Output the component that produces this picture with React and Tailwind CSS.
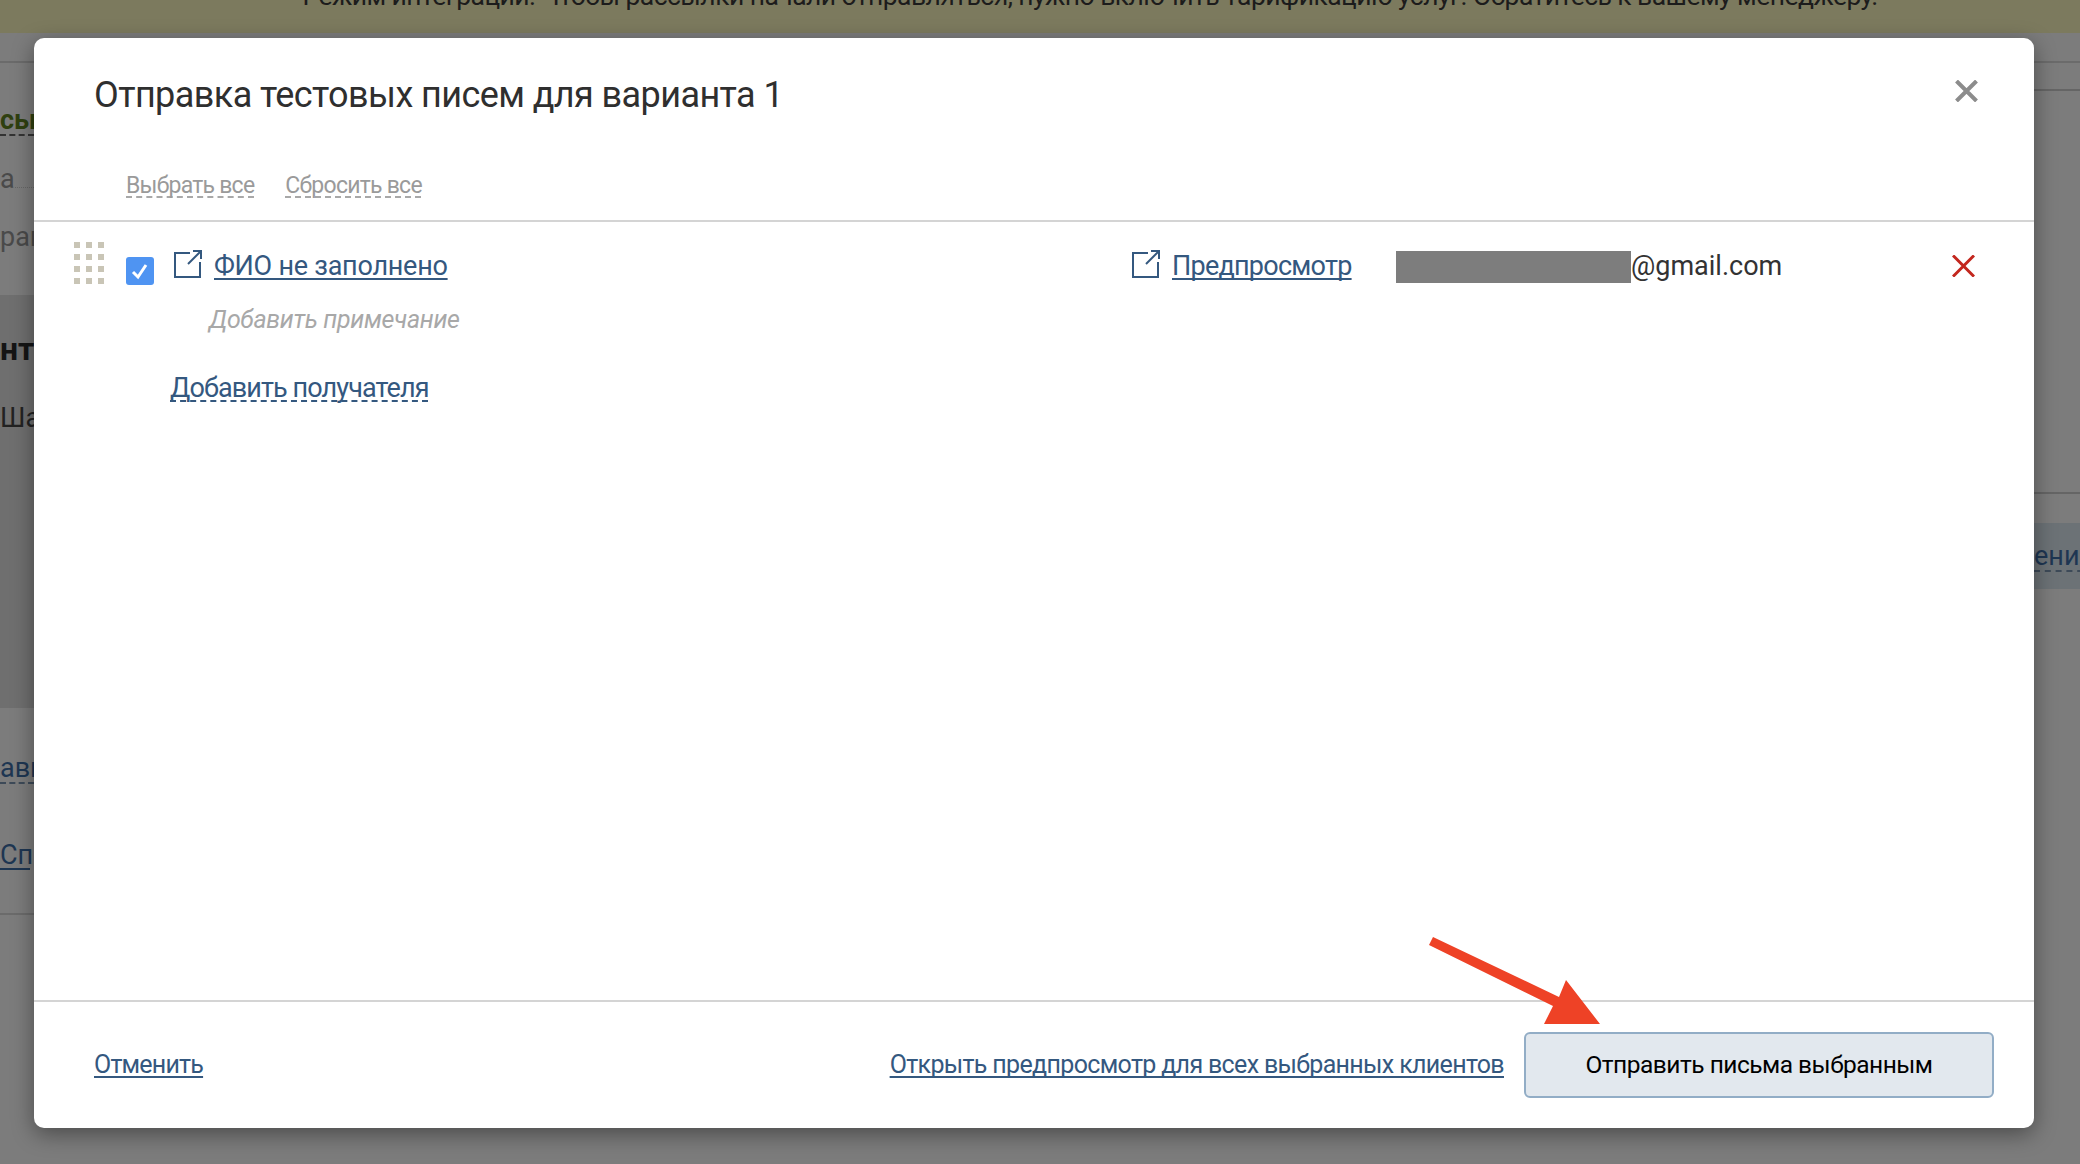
import React from 'react';

const linkCls = 'underline decoration-2 underline-offset-[3px] [text-decoration-skip-ink:none] text-[#34587f]';
const dashedCls = 'underline decoration-dashed decoration-2 underline-offset-[3px] [text-decoration-skip-ink:none]';

function LinkIcon({ className }) {
  return (
    <svg viewBox="0 0 28 28" className={className} fill="none" stroke="#34587f" strokeWidth="2">
      <path d="M16 3H1v24h25V12" />
      <path d="M14 14L27 1" />
      <path d="M19 1h8v8" />
    </svg>
  );
}

function Grip() {
  const dots = Array.from({ length: 12 });
  return (
    <div className="grid w-[30px] shrink-0 grid-cols-3 gap-[6px]">
      {dots.map((_, i) => (
        <span key={i} className="h-[6px] w-[6px] bg-[#c9c5b6]" />
      ))}
    </div>
  );
}

function Checkbox() {
  return (
    <div className="ml-[22px] mt-[15px] h-[28px] w-[28px] shrink-0 rounded-[3px] bg-[#4f94f2]">
      <svg viewBox="0 0 28 28" className="h-[28px] w-[28px]" fill="none" stroke="#fff" strokeWidth="3">
        <path d="M7 15l5 5 8-12" />
      </svg>
    </div>
  );
}

function LeftStrip() {
  return (
    <div className="w-[34px] shrink-0 overflow-hidden whitespace-nowrap text-[27px] text-[#222]">
      <div className="h-[30px] border-b-2 border-[#6b6b6b]" />
      <div className="mt-[44px] border-b-2 border-dashed border-[#333] font-bold leading-[27px] text-[#2f4010]">сы</div>
      <div className="mt-[28px] flex leading-[30px] text-[#4a4a4a]">
        <span>а</span>
        <span className="mb-[6px] flex-1 border-b border-dotted border-[#666]" />
      </div>
      <div className="mt-[28px] leading-[30px] text-[#4a4a4a]">рав</div>
      <div className="mt-[43px] h-[413px] bg-[#6f6f6f] pt-[36px]">
        <div className="text-[32px] font-bold leading-[36px] text-[#151515]">нт</div>
        <div className="mt-[36px] leading-[30px]">Шаб</div>
      </div>
      <div className="mt-[47px] border-b-2 border-dashed border-[#3d4a58] leading-[27px] text-[#1e3652]">авк</div>
      <div className="mt-[59px] w-[30px] border-b-2 border-[#1e3652] leading-[25px] text-[#1e3652]">Сп</div>
      <div className="mt-[43px] border-b-2 border-[#6b6b6b]" />
    </div>
  );
}

function RightStrip() {
  return (
    <div className="min-w-0 flex-1 overflow-hidden whitespace-nowrap">
      <div className="h-[30px] border-b-2 border-[#6b6b6b]" />
      <div className="mt-[26px] border-b-2 border-[#656565]" />
      <div className="mt-[401px] border-b-2 border-[#656565]" />
      <div className="mt-[29px] h-[66px] bg-[#6c7276] pt-[19px]">
        <div className="w-max border-b-2 border-dashed border-[#3d4a58] text-[27px] leading-[28px] text-[#1e3652]">ение</div>
      </div>
    </div>
  );
}

export default function App() {
  return (
    <div className="relative h-[1164px] w-[2080px] overflow-hidden bg-[#7c7c7c] font-['Roboto',sans-serif]">
      <div className="flex h-[33px] items-end justify-center overflow-hidden bg-[#7c7a5e] pb-[22px] pl-[100px] text-[26.5px] leading-[30px] tracking-[-0.55px] text-[#1c1c1c]">
        <span className="whitespace-nowrap">Режим интеграции. Чтобы рассылки начали отправляться, нужно включить тарификацию услуг. Обратитесь к вашему менеджеру.</span>
      </div>
      <div className="flex">
        <LeftStrip />
        <div className="relative z-10 mt-[5px] flex h-[1090px] w-[2000px] shrink-0 flex-col rounded-[10px] bg-white shadow-[0_6px_22px_rgba(0,0,0,0.4)]">
          <div className="flex justify-between pl-[60px] pr-[56px] pt-[33px]">
            <h1 className="text-[36px] font-normal leading-[48px] tracking-[-0.58px] text-[#2f2f2f]">Отправка тестовых писем для варианта 1</h1>
            <svg viewBox="0 0 23 22" className="mt-[9px] h-[22px] w-[23px]" fill="none" stroke="#8c8c8c" strokeWidth="4">
              <path d="M1.5 1l20 20M21.5 1l-20 20" />
            </svg>
          </div>
          <div className="flex h-[103px] shrink-0 items-start gap-[31px] border-b-2 border-[#d4d4d4] pl-[92px] pt-[52px] text-[23px] leading-[30px] tracking-[-0.75px] text-[#9a9a9a]">
            <span className={`${dashedCls} decoration-[#a8a8a8]`}>Выбрать все</span>
            <span className={`${dashedCls} decoration-[#a8a8a8]`}>Сбросить все</span>
          </div>
          <div className="flex-1 pl-[40px] pr-[59px] pt-[20px]">
            <div className="flex items-start">
              <Grip />
              <Checkbox />
              <LinkIcon className="ml-[20px] mt-[8px] h-[28px] w-[28px] shrink-0" />
              <div className="ml-[12px] mt-[8px] w-[918px] shrink-0 text-[27px] leading-[33px] tracking-[-0.25px]">
                <a className={linkCls}>ФИО не заполнено</a>
              </div>
              <LinkIcon className="mt-[8px] h-[28px] w-[28px] shrink-0" />
              <div className="ml-[12px] mt-[8px] w-[224px] shrink-0 text-[27px] leading-[33px] tracking-[-0.75px]">
                <a className={linkCls}>Предпросмотр</a>
              </div>
              <div className="mt-[9px] h-[32px] w-[235px] shrink-0 bg-[#7d7d7d]" />
              <span className="mt-[8px] text-[27px] leading-[33px] text-[#333]">@gmail.com</span>
              <svg viewBox="0 0 23 22" className="ml-auto mt-[13px] h-[22px] w-[23px]" fill="none" stroke="#c3271e" strokeWidth="3">
                <path d="M1 0.5l21 21M22 0.5l-21 21" />
              </svg>
            </div>
            <div className="ml-[135px] mt-[19px] text-[25px] italic leading-[32px] tracking-[-0.35px] text-[#a8a8a8]">Добавить примечание</div>
            <div className="ml-[96px] mt-[36px] text-[27px] leading-[33px] tracking-[-0.9px]">
              <a className={`${dashedCls} text-[#34587f]`}>Добавить получателя</a>
            </div>
          </div>
          <div className="flex h-[128px] shrink-0 items-center border-t-2 border-[#d4d4d4] pl-[60px] pr-[40px]">
            <a className={`${linkCls} text-[25px] leading-[30px] tracking-[-0.8px]`}>Отменить</a>
            <a className={`${linkCls} ml-auto text-[25px] leading-[30px] tracking-[-0.66px]`}>Открыть предпросмотр для всех выбранных клиентов</a>
            <button className="ml-[20px] h-[66px] w-[470px] rounded-[6px] border-2 border-[#92adc6] bg-[#e2e8ee] text-[24.5px] tracking-[-0.5px] text-black">Отправить письма выбранным</button>
          </div>
        </div>
        <RightStrip />
      </div>
      <svg viewBox="0 0 180 100" className="absolute left-[1425px] top-[935px] z-20 h-[100px] w-[180px]">
        <path d="M4 10L8 2L134 62L141 45L175 89H119L128 71Z" fill="#ee4226" />
      </svg>
    </div>
  );
}
